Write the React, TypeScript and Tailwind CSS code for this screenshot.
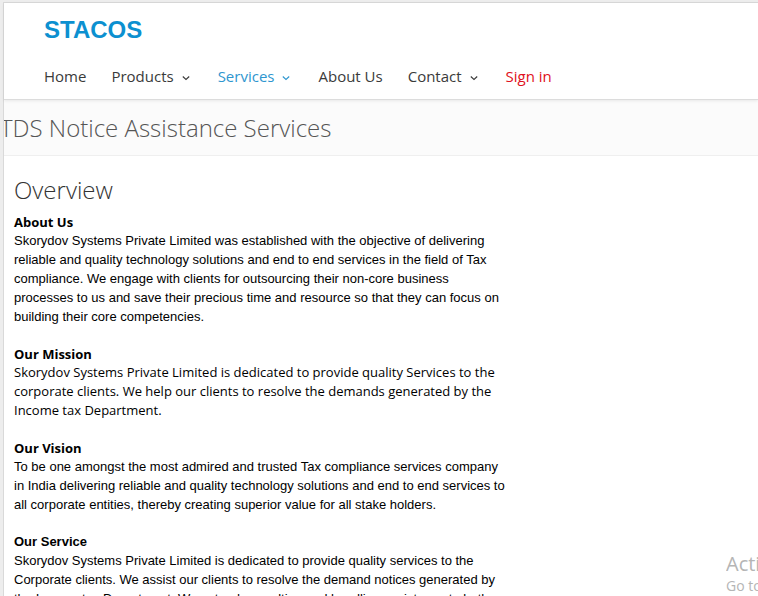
import React from "react";

type NavItem = { label: string; menu?: boolean; color: string };

const navItems: NavItem[] = [
  { label: "Home", color: "text-[#3a3a3a]" },
  { label: "Products", menu: true, color: "text-[#3a3a3a]" },
  { label: "Services", menu: true, color: "text-[#2e96cf]" },
  { label: "About Us", color: "text-[#3a3a3a]" },
  { label: "Contact", menu: true, color: "text-[#3a3a3a]" },
  { label: "Sign in", color: "text-[#e01020]" },
];

const sans = "font-['Open_Sans',sans-serif]";
const arial = "font-['Liberation_Sans',Arial,sans-serif]";

type Section = { title: string; titleFont: string; bodyFont: string; lines: string[] };

const sections: Section[] = [
  {
    title: "About Us",
    titleFont: sans,
    bodyFont: arial,
    lines: [
      "Skorydov Systems Private Limited was established with the objective of delivering",
      "reliable and quality technology solutions and end to end services in the field of Tax",
      "compliance. We engage with clients for outsourcing their non-core business",
      "processes to us and save their precious time and resource so that they can focus on",
      "building their core competencies.",
    ],
  },
  {
    title: "Our Mission",
    titleFont: sans,
    bodyFont: sans,
    lines: [
      "Skorydov Systems Private Limited is dedicated to provide quality Services to the",
      "corporate clients. We help our clients to resolve the demands generated by the",
      "Income tax Department.",
    ],
  },
  {
    title: "Our Vision",
    titleFont: sans,
    bodyFont: arial,
    lines: [
      "To be one amongst the most admired and trusted Tax compliance services company",
      "in India delivering reliable and quality technology solutions and end to end services to",
      "all corporate entities, thereby creating superior value for all stake holders.",
    ],
  },
  {
    title: "Our Service",
    titleFont: arial,
    bodyFont: arial,
    lines: [
      "Skorydov Systems Private Limited is dedicated to provide quality services to the",
      "Corporate clients. We assist our clients to resolve the demand notices generated by",
      "the Income tax Department. We extend consulting and handling assistance to both",
    ],
  },
];

function Chevron() {
  return (
    <svg className="mt-[3px] ml-2 h-2 w-2" viewBox="0 0 8 8" fill="none" stroke="currentColor" aria-hidden="true">
      <path d="M0.8 2.5 L4 5.5 L7.2 2.5" strokeWidth="1.1" />
    </svg>
  );
}

export default function App() {
  return (
    <div className={`relative h-screen overflow-hidden bg-[#ededed] pt-[2px] pl-[3px] ${sans}`}>
      <div className="h-full border-t border-l border-[#d9d9d9] bg-white">
        <header className="relative border-b border-[#dcdcdc] bg-white pb-[11px] pl-10 shadow-[0_1px_3px_rgba(0,0,0,0.08)]">
          <a href="#home" className={`block pt-[13px] text-2xl leading-7 font-bold text-[#0c90d0] ${arial}`}>
            STACOS
          </a>
          <nav className="mt-5 flex gap-[25px] text-[15px] leading-6">
            {navItems.map((item) => (
              <a
                key={item.label}
                href="#nav"
                className={`flex items-center whitespace-nowrap ${item.menu ? "pr-[3px]" : ""} ${item.color}`}
              >
                {item.label}
                {item.menu && <Chevron />}
              </a>
            ))}
          </nav>
        </header>
        <div className="overflow-hidden border-b border-[#efefef] bg-[#fbfbfb] pt-3 pb-[11px]">
          <h1 className="-ml-1 text-2xl leading-8 font-light whitespace-nowrap text-[#555]">
            TDS Notice Assistance Services
          </h1>
        </div>
        <main className="pt-[18px] pl-[10px]">
          <h2 className="text-2xl leading-8 font-light text-[#333]">Overview</h2>
          <div className="mt-[7px] flex flex-col gap-[19px] text-[13px] leading-[19px] whitespace-nowrap text-black">
            {sections.map((s) => (
              <section key={s.title}>
                <h3 className={`leading-[18px] font-bold ${s.titleFont}`}>{s.title}</h3>
                <p className={s.bodyFont}>
                  {s.lines.map((line) => (
                    <span key={line} className="block">
                      {line}
                    </span>
                  ))}
                </p>
              </section>
            ))}
          </div>
        </main>
      </div>
      <div className="absolute right-0 bottom-0 w-8 overflow-hidden whitespace-nowrap text-[#b5b5b5]">
        <p className="text-xl leading-6">Activate</p>
        <p className="text-sm leading-5">Go to</p>
      </div>
    </div>
  );
}
